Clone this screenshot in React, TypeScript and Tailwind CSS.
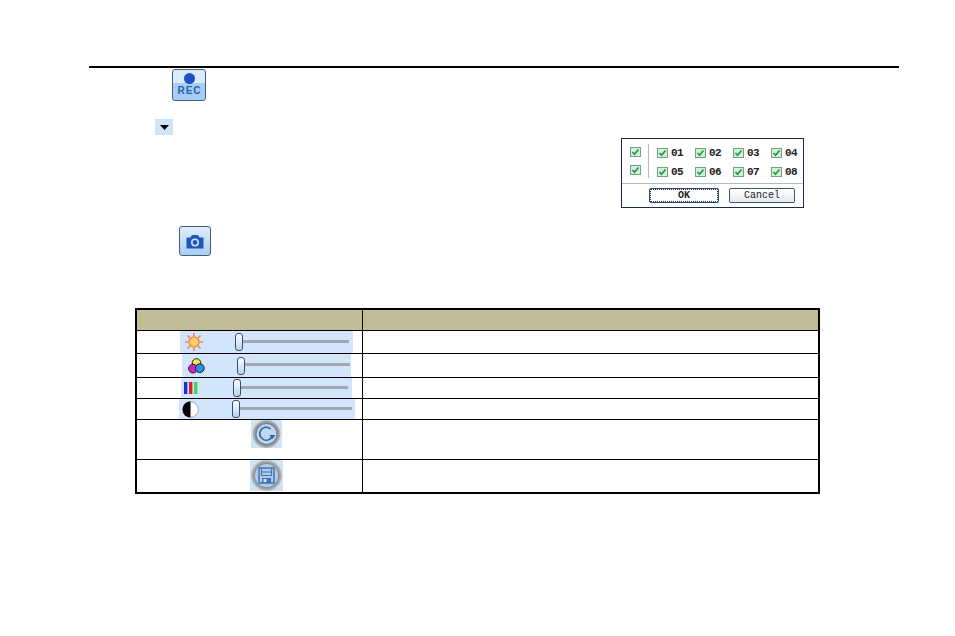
const Check = () => (
  <span className="flex h-[10px] w-[11px] shrink-0 items-center justify-center border border-[#6f9c9c] bg-[#d4efd6]">
    <svg width="9" height="8" viewBox="0 0 9 8">
      <path d="M1.5 4 L3.5 6.2 L7.5 1.5" fill="none" stroke="#1f9a3c" strokeWidth="1.7" />
    </svg>
  </span>
);

const Box = ({ n, w }: { n: string; w: string }) => (
  <div className={`flex items-center gap-[3px] ${w}`}>
    <Check />
    <span className="mt-[1px] font-['Liberation_Mono',monospace] text-[11px] leading-[10px] font-bold tracking-[-0.6px] text-[#222]">{n}</span>
  </div>
);

const Slider = ({ icon, ml, w, iconMl, handleMl, trackW }: { icon: React.ReactNode; ml: string; w: string; iconMl: string; handleMl: string; trackW: string }) => (
  <div className={`flex h-full items-center bg-[#d2e5fb] ${ml} ${w}`}>
    <div className={`flex w-[18px] shrink-0 justify-center ${iconMl}`}>{icon}</div>
    <div className={`h-[18px] w-[8px] shrink-0 rounded-[3px] border border-[#34506e] bg-gradient-to-b from-white to-[#b5d2f0] ${handleMl}`} />
    <div className={`mb-[2px] h-[3px] bg-[#a0a8b2] ${trackW}`} />
  </div>
);

const Sun = () => (
  <svg width="18" height="18" viewBox="0 0 18 18">
    <g stroke="#ea8a52" strokeWidth="1.7">
      <path d="M9 0V3M9 15V18M0 9H3M15 9H18M2.5 2.5L4.8 4.8M13.2 13.2L15.5 15.5M2.5 15.5L4.8 13.2M13.2 4.8L15.5 2.5" />
    </g>
    <circle cx="9" cy="9" r="5" fill="#fbd060" stroke="#ea8a52" strokeWidth="1.5" />
  </svg>
);

const Colors = () => (
  <svg width="17" height="16" viewBox="0 0 17 16">
    <circle cx="8.5" cy="5" r="4.3" fill="#f6e84a" stroke="#222" strokeWidth="1" />
    <circle cx="5" cy="10.6" r="4.4" fill="#d81fc8" stroke="#222" strokeWidth="1" />
    <circle cx="11.8" cy="10.2" r="4.4" fill="#1f92e8" stroke="#222" strokeWidth="1" />
  </svg>
);

const Bars = () => (
  <svg width="14" height="12" viewBox="0 0 14 12">
    <rect x="0" y="0" width="3.4" height="12" fill="#1a2fd8" />
    <rect x="5" y="0" width="3.4" height="12" fill="#d81f28" />
    <rect x="10" y="0" width="3.4" height="12" fill="#3fdc5a" />
  </svg>
);

const Contrast = () => (
  <svg width="17" height="17" viewBox="0 0 17 17">
    <circle cx="8.5" cy="8.5" r="7.8" fill="#fff" stroke="#8a94a0" strokeWidth="0.8" />
    <path d="M8.5 0.5A8 8 0 0 0 8.5 16.5Z" fill="#000" />
  </svg>
);

const Refresh = () => (
  <svg width="31" height="28" viewBox="0 0 31 28" className="bg-[#cfe3f2]">
    <defs>
      <radialGradient id="ra" cx="50%" cy="50%" r="50%">
        <stop offset="70%" stopColor="#6f767d" />
        <stop offset="100%" stopColor="#b6c0c8" />
      </radialGradient>
    </defs>
    <circle cx="15.5" cy="14" r="14" fill="url(#ra)" />
    <circle cx="15.5" cy="14" r="10" fill="#c0d6ec" />
    <path d="M21.5 15.5A6.5 6.5 0 1 1 19.5 8.8" fill="none" stroke="#2c62ad" strokeWidth="1.6" />
    <path d="M18.5 15H24.5L21.5 19Z" fill="#2c62ad" />
  </svg>
);

const Save = () => (
  <svg width="33" height="31" viewBox="0 0 33 31" className="bg-[#cfe3f2]">
    <defs>
      <radialGradient id="rb" cx="50%" cy="50%" r="50%">
        <stop offset="72%" stopColor="#7b8289" />
        <stop offset="100%" stopColor="#bcc6ce" />
      </radialGradient>
    </defs>
    <circle cx="16.5" cy="15.5" r="15.5" fill="url(#rb)" />
    <circle cx="16.5" cy="15.5" r="11.6" fill="#b4cde6" />
    <path d="M9 8H24V23H9Z" fill="none" stroke="#3f72b8" strokeWidth="1.5" />
    <path d="M11.5 9V15.5H21.5V9M11.5 12H21.5" fill="none" stroke="#3f72b8" strokeWidth="1.2" />
    <rect x="12" y="18" width="9" height="5" fill="#3f72b8" />
    <rect x="13.5" y="19" width="3" height="3" fill="#d9e6f4" />
  </svg>
);

export default function App() {
  return (
    <div className="h-[636px] w-[955px] overflow-hidden bg-white pt-[66px]">
      <div className="ml-[89px] h-[2px] w-[810px] bg-black" />

      <div className="ml-[172px] mt-[1px] flex h-[32px] w-[34px] flex-col items-center overflow-hidden rounded-[3px] border border-[#42607e] bg-gradient-to-b from-[#dcebfb] from-45% to-[#a8cdf2] to-45%">
        <span className="mt-[3px] h-[11px] w-[11px] rounded-full bg-[#1c50c6]" />
        <span className="ml-[1px] mt-[1px] font-['Liberation_Sans',sans-serif] text-[10px] leading-[12px] font-bold tracking-[1px] text-[#2a5fb8]">REC</span>
      </div>

      <div className="flex">
        <div className="ml-[155px] w-[466px] shrink-0">
          <div className="mt-[18px] flex h-[16px] w-[18px] items-center justify-center bg-[#cfe4fb]">
            <svg width="9" height="5" viewBox="0 0 9 5"><path d="M0 0H9L4.5 5Z" fill="#000" /></svg>
          </div>
          <div className="ml-[24px] mt-[91px] flex h-[30px] w-[32px] items-center justify-center rounded-[3px] border border-[#42607e] bg-gradient-to-b from-[#e2eefb] to-[#a8cdf2]">
            <svg width="18" height="15" viewBox="0 0 18 15">
              <path d="M0.5 3.5H4.5L6 1H12L13.5 3.5H17.5V14.5H0.5Z" fill="#1f56b8" />
              <circle cx="9" cy="8.5" r="4" fill="#cfe2f7" />
              <circle cx="9" cy="8.5" r="2.4" fill="#1f56b8" />
            </svg>
          </div>
        </div>

        <div className="mt-[37px] h-[70px] w-[183px] shrink-0 border border-[#1a2a4a] bg-white">
          <div className="flex h-[45px] border-b border-[#b8b8b8]">
            <div className="my-[5px] flex w-[27px] flex-col items-center justify-between border-r border-[#b8b8b8] pb-[3px] pl-[1px] pt-[3px]">
              <Check />
              <Check />
            </div>
            <div className="flex flex-col gap-[8px] pl-[8px] pt-[8px]">
              <div className="flex">
                <Box n="01" w="w-[38px]" />
                <Box n="02" w="w-[38px]" />
                <Box n="03" w="w-[38px]" />
                <Box n="04" w="w-[30px]" />
              </div>
              <div className="flex">
                <Box n="05" w="w-[38px]" />
                <Box n="06" w="w-[38px]" />
                <Box n="07" w="w-[38px]" />
                <Box n="08" w="w-[30px]" />
              </div>
            </div>
          </div>
          <div className="flex gap-[10px] pl-[27px] pt-[4px]">
            <div className="flex h-[15px] w-[70px] items-center justify-center rounded-[2px] border border-[#2a4a7a] bg-white font-['Liberation_Mono',monospace] text-[10px] font-bold text-[#222] outline-1 -outline-offset-2 outline-dotted outline-[#333]">OK</div>
            <div className="flex h-[15px] w-[66px] items-center justify-center rounded-[2px] border border-[#44566c] bg-gradient-to-b from-white to-[#e6eaf0] font-['Liberation_Mono',monospace] text-[10px] text-[#222]">Cancel</div>
          </div>
        </div>
      </div>

      <div className="ml-[135px] mt-[52px] w-[685px] border-2 border-black">
        <div className="flex h-[20px] bg-[#c4bc96]">
          <div className="w-[226px] border-r border-black" />
        </div>
        <div className="flex h-[23px] border-t border-black">
          <div className="w-[226px] border-r border-black">
            <Slider icon={<Sun />} ml="ml-[43px]" w="w-[173px]" iconMl="ml-[5px]" handleMl="ml-[32px]" trackW="w-[106px]" />
          </div>
        </div>
        <div className="flex h-[24px] border-t border-black">
          <div className="w-[226px] border-r border-black">
            <Slider icon={<Colors />} ml="ml-[45px]" w="w-[169px]" iconMl="ml-[5px]" handleMl="ml-[32px]" trackW="w-[105px]" />
          </div>
        </div>
        <div className="flex h-[21px] border-t border-black">
          <div className="w-[226px] border-r border-black">
            <Slider icon={<Bars />} ml="ml-[44px]" w="w-[171px]" iconMl="ml-[1px]" handleMl="ml-[33px]" trackW="w-[107px]" />
          </div>
        </div>
        <div className="flex h-[21px] border-t border-black">
          <div className="w-[226px] border-r border-black">
            <Slider icon={<Contrast />} ml="ml-[42px]" w="w-[176px]" iconMl="ml-[2px]" handleMl="ml-[33px]" trackW="w-[112px]" />
          </div>
        </div>
        <div className="flex h-[40px] border-t border-black">
          <div className="w-[226px] border-r border-black pl-[114px]">
            <Refresh />
          </div>
        </div>
        <div className="flex h-[33px] border-t border-black">
          <div className="w-[226px] border-r border-black pl-[113px]">
            <Save />
          </div>
        </div>
      </div>
    </div>
  );
}
